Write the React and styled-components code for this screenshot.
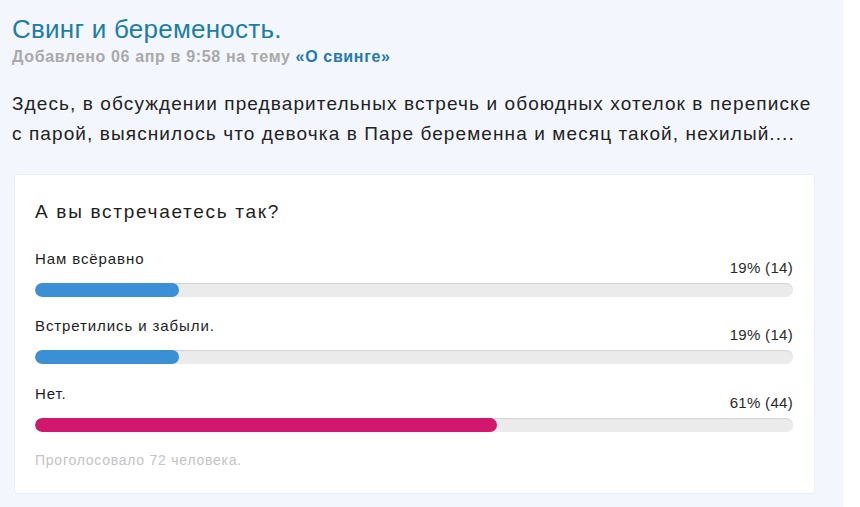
import React from "react";
import styled, {createGlobalStyle} from "styled-components";

const GlobalStyle = createGlobalStyle`
  html, body {
    margin: 0;
    padding: 0;
    background: #ffffff;
  }
  body {
    font-family: "Liberation Sans", Arial, sans-serif;
  }
`;

const poll = {
  question: "А вы встречаетесь так?",
  total: 72,
  options: [
    {label: "Нам всёравно", percent: 19, votes: 14, color: "#3a8fd5"},
    {label: "Встретились и забыли.", percent: 19, votes: 14, color: "#3a8fd5"},
    {label: "Нет.", percent: 61, votes: 44, color: "#d2186e"},
  ],
};

export default function App() {
  return (
    <>
      <GlobalStyle/>
      <Page>
        <Title>Свинг и беременость.</Title>
        <Meta>
          Добавлено 06 апр в 9:58 на тему <TopicLink href="#">«О свинге»</TopicLink>
        </Meta>
        <Body>
          Здесь, в обсуждении предварительных встречь и обоюдных хотелок в переписке
          с парой, выяснилось что девочка в Паре беременна и месяц такой, нехилый....
        </Body>

        <PollCard>
          <Question>{poll.question}</Question>
          {poll.options.map((opt, i) => (
            <Option key={i}>
              <OptionHead>
                <OptionLabel>{opt.label}</OptionLabel>
                <OptionValue>{opt.percent}% ({opt.votes})</OptionValue>
              </OptionHead>
              <Track>
                <Fill $color={opt.color} style={{width: opt.percent + "%"}}/>
              </Track>
            </Option>
          ))}
          <Voted>Проголосовало {poll.total} человека.</Voted>
        </PollCard>
      </Page>
    </>
  );
}

const Page = styled.div`
  width: 843px;
  min-height: 507px;
  box-sizing: border-box;
  padding: 14px 0 13px 12px;
  background: #f3f6fd;
`;

const Title = styled.h1`
  margin: 0;
  font-size: 26px;
  line-height: 30px;
  font-weight: normal;
  letter-spacing: 0.25px;
  color: #1b7ea7;
`;

const Meta = styled.div`
  margin-top: 4px;
  font-size: 16px;
  line-height: 18px;
  font-weight: bold;
  letter-spacing: 0.65px;
  color: #a9a9a9;
`;

const TopicLink = styled.a`
  color: #2479ad;
  text-decoration: none;
`;

const Body = styled.p`
  margin: 23px 0 0;
  width: 810px;
  font-size: 19px;
  line-height: 30px;
  letter-spacing: 1.1px;
  color: #222;
`;

const PollCard = styled.div`
  margin: 25px 0 0 2px;
  width: 801px;
  box-sizing: border-box;
  padding: 25px 21px 24px 20px;
  background: #ffffff;
  border: 1px solid #e9edf6;
  border-radius: 4px;
`;

const Question = styled.div`
  font-size: 19px;
  line-height: 24px;
  letter-spacing: 1.7px;
  color: #1e1e1e;
  margin-bottom: 24.5px;
`;

const Option = styled.div`
  & + & {
    margin-top: 19.5px;
  }
`;

const OptionHead = styled.div`
  display: flex;
  justify-content: space-between;
  align-items: flex-end;
  margin-bottom: 6px;
`;

const OptionLabel = styled.div`
  font-size: 15px;
  line-height: 20px;
  letter-spacing: 0.9px;
  color: #1e1e1e;
  margin-bottom: 8px;
`;

const OptionValue = styled.div`
  font-size: 15px;
  line-height: 18px;
  letter-spacing: 0.3px;
  color: #2a2a2a;
`;

const Track = styled.div`
  height: 14px;
  border-radius: 7px;
  background: #ebebeb;
  box-shadow: inset 0 1px 1px rgba(0, 0, 0, 0.1);
  overflow: hidden;
`;

const Fill = styled.div`
  height: 100%;
  border-radius: 7px;
  background: ${p => p.$color};
`;

const Voted = styled.div`
  margin-top: 19.5px;
  font-size: 14px;
  line-height: 18px;
  letter-spacing: 0.75px;
  color: #c3c3c3;
`;
